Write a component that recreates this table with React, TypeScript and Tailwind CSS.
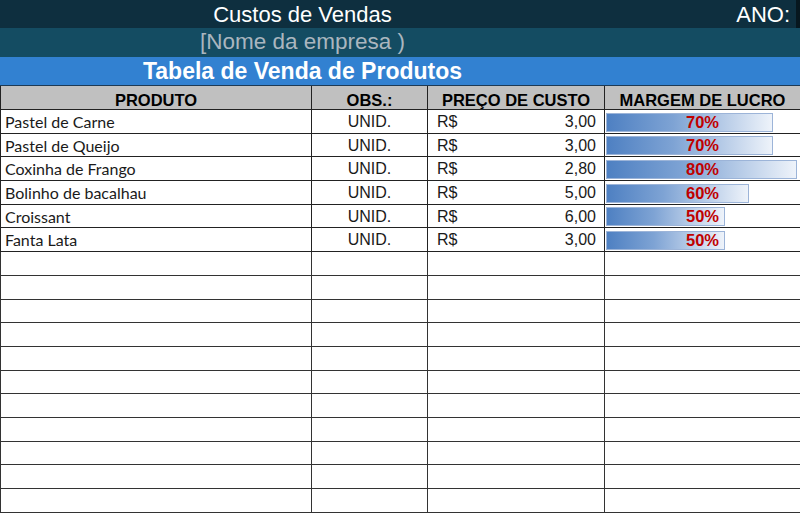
import React from "react";

const rows = [
  { p: "Pastel de Carne", v: "3,00", m: 70 },
  { p: "Pastel de Queijo", v: "3,00", m: 70 },
  { p: "Coxinha de Frango", v: "2,80", m: 80 },
  { p: "Bolinho de bacalhau", v: "5,00", m: 60 },
  { p: "Croissant", v: "6,00", m: 50 },
  { p: "Fanta Lata", v: "3,00", m: 50 },
];

const cols = "grid grid-cols-[312px_116px_177px_195px]";

export default function App() {
  const empty = Array.from({ length: 11 });
  return (
    <div className="w-[800px] h-[514px] overflow-hidden bg-white" style={{ fontFamily: '"Liberation Sans", Arial, sans-serif' }}>
      <div className="h-[28px] bg-[#0e2f3f] flex items-center text-white text-[22px] relative">
        <div className="w-[605px] text-center leading-none pt-[1px]">Custos de Vendas</div>
        <div className="flex-1 text-right pr-[6px] leading-none pt-[1px]">ANO:</div>
        <div className="w-[4px] h-full bg-[#07171f]"></div>
      </div>
      <div className="h-[29px] bg-[#144c62] flex items-center text-[#aab6bf] text-[22.5px]">
        <div className="w-[605px] text-center leading-none">[Nome da empresa )</div>
      </div>
      <div className="h-[29px] bg-[#3281d1] flex items-center text-white text-[23px] font-bold border-b border-[#1d3a55]">
        <div className="w-[605px] text-center leading-none pt-[1px]">Tabela de Venda de Produtos</div>
      </div>
      <div className={`${cols} h-[24px] bg-[#c0c0c0] border-b border-[#222] text-[16.5px] font-bold text-black`}>
        <div className="flex items-center justify-center border-r border-[#222] border-l pt-[2px]">PRODUTO</div>
        <div className="flex items-center justify-center border-r border-[#222] pt-[2px]">OBS.:</div>
        <div className="flex items-center justify-center border-r border-[#222] pt-[2px]">PREÇO DE CUSTO</div>
        <div className="flex items-center justify-center pt-[2px]">MARGEM DE LUCRO</div>
      </div>
      {rows.map((r) => (
        <div key={r.p} className={`${cols} h-[23.7px] border-b border-[#222] text-[16px] text-[#1a1a1a]`}>
          <div className="flex items-center pl-[4px] border-r border-l border-[#222]" style={{ fontFamily: 'Lato, "Noto Sans", sans-serif' }}>{r.p}</div>
          <div className="flex items-center justify-center border-r border-[#222]">UNID.</div>
          <div className="flex items-center justify-between pl-[9px] pr-[8px] border-r border-[#222]">
            <span>R$</span>
            <span>{r.v}</span>
          </div>
          <div className="relative flex items-center pl-[1px]">
            <div
              className="h-[19px] border border-[#9cb4d8] bg-[linear-gradient(to_right,#4e80c2,#7ea3d4_40%,#eef3fa)]"
              style={{ width: `${(r.m / 80) * 191}px` }}
            ></div>
            <div className="absolute inset-0 flex items-center justify-center text-[#c00000] font-bold text-[16.5px]">{r.m}%</div>
          </div>
        </div>
      ))}
      {empty.map((_, i) => (
        <div key={i} className={`${cols} h-[23.7px] border-b border-[#333]`}>
          <div className="border-r border-l border-[#333]"></div>
          <div className="border-r border-[#333]"></div>
          <div className="border-r border-[#333]"></div>
          <div></div>
        </div>
      ))}
    </div>
  );
}
